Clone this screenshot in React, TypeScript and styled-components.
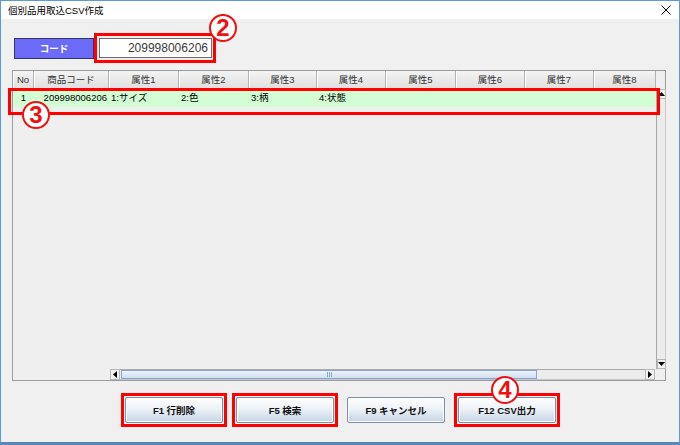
import styled, { createGlobalStyle } from "styled-components";

const GlobalStyle = createGlobalStyle`
  html, body {
    margin: 0;
    padding: 0;
    background: #ffffff;
  }
  body {
    font-family: "Liberation Sans", "Noto Sans CJK JP", sans-serif;
  }
`;

const Window = styled.div`
  width: 680px;
  height: 445px;
  box-sizing: border-box;
  border: 1px solid #5b9bd5;
  border-bottom: 3px solid #5a86b5;
  background: #f0f0f0;
  display: flex;
  flex-direction: column;
`;

const TitleBar = styled.div`
  height: 18px;
  background: #ffffff;
  display: flex;
  align-items: center;
  justify-content: space-between;
  padding: 0 8px 0 7px;
  font-size: 9.5px;
  color: #000;
`;

const Body = styled.div`
  flex: 1;
  display: flex;
  flex-direction: column;
  padding: 0 13px 0 10px;
`;

const CodeRow = styled.div`
  display: flex;
  align-items: center;
  margin-top: 14px;
  padding-left: 3px;
`;

const CodeLabel = styled.div`
  width: 80px;
  height: 21px;
  box-sizing: border-box;
  background: #6b6bf7;
  border: 1px solid #34346a;
  color: #ffffff;
  font-weight: 700;
  font-size: 9.5px;
  display: flex;
  align-items: center;
  justify-content: center;
`;

const Mark = styled.div<{ $on?: boolean; $pad?: string }>`
  position: relative;
  border: 3px solid ${(p) => (p.$on === false ? "transparent" : "#ff0000")};
  padding: ${(p) => p.$pad || "1px"};
`;

const CodeInput = styled.div`
  width: 113px;
  height: 20px;
  box-sizing: border-box;
  background: #ffffff;
  border: 1px solid #6d6d6d;
  color: #3a3a3a;
  font-size: 12px;
  text-align: right;
  padding-right: 3px;
  line-height: 18px;
`;

const Circle = styled.div<{ $x: number; $y: number }>`
  position: absolute;
  left: ${(p) => p.$x}px;
  top: ${(p) => p.$y}px;
  width: 28px;
  height: 28px;
  box-sizing: border-box;
  border: 2px solid #ee1111;
  border-radius: 50%;
  background: #ffffff;
  color: #ee1111;
  font-weight: 700;
  font-size: 24px;
  line-height: 1;
  display: flex;
  align-items: center;
  justify-content: center;
  z-index: 2;
`;

const TableFrame = styled.div`
  position: relative;
  margin-top: 7px;
  margin-left: 1px;
  height: 311px;
  box-sizing: border-box;
  border: 1px solid #9c9c9c;
  background: #efefef;
  display: flex;
  flex-direction: column;
`;

const TableMain = styled.div`
  flex: 1;
  display: flex;
  min-height: 0;
`;

const Grid = styled.div`
  width: 643px;
  display: flex;
  flex-direction: column;
`;

const HeaderRow = styled.div`
  display: flex;
  height: 18px;
`;

const HeaderCell = styled.div<{ $w: number; $left?: boolean }>`
  width: ${(p) => p.$w}px;
  box-sizing: border-box;
  background: linear-gradient(#f3f3f3, #dfdfdf);
  border-right: 1px solid #b3b3b3;
  box-shadow: inset 1px 0 #ffffff;
  color: #333;
  font-size: 9.5px;
  line-height: 18px;
  text-align: ${(p) => (p.$left ? "left" : "center")};
  padding-left: ${(p) => (p.$left ? "4px" : "0")};
`;

const DataRow = styled.div`
  display: flex;
  height: 18px;
  background: #d3fdd3;
`;

const DataCell = styled.div<{ $w: number; $align?: string }>`
  width: ${(p) => p.$w}px;
  box-sizing: border-box;
  color: #000;
  font-size: 9.5px;
  line-height: 18px;
  white-space: nowrap;
  overflow: hidden;
  text-align: ${(p) => p.$align || "left"};
  padding: 0 2px;
`;

const VScroll = styled.div`
  width: 10px;
  display: flex;
  flex-direction: column;
`;

const Corner = styled.div<{ $h: number }>`
  height: ${(p) => p.$h}px;
  width: 10px;
  flex: none;
`;

const VTrack = styled.div`
  flex: 1;
  box-sizing: border-box;
  border-left: 1px solid #a9a9a9;
  border-right: 1px solid #c8c8c8;
  background: #ececec;
  display: flex;
  flex-direction: column;
  justify-content: space-between;
`;

const ArrowBox = styled.div<{ $w: number; $h: number }>`
  width: ${(p) => p.$w}px;
  height: ${(p) => p.$h}px;
  box-sizing: border-box;
  flex: none;
  background: #f2f2f2;
  border: 1px solid #b8b8b8;
  display: flex;
  align-items: center;
  justify-content: center;
`;

const HScroll = styled.div`
  height: 11px;
  display: flex;
`;

const HSpacer = styled.div`
  width: 97px;
  flex: none;
`;

const HTrack = styled.div`
  flex: 1;
  box-sizing: border-box;
  border-top: 1px solid #a9a9a9;
  border-bottom: 1px solid #c8c8c8;
  background: #ececec;
  display: flex;
  align-items: stretch;
`;

const Thumb = styled.div`
  width: 416px;
  margin-left: 1px;
  box-sizing: border-box;
  border: 1px solid #86a6d2;
  background: linear-gradient(#eef4fb, #d0dff2);
  display: flex;
  align-items: center;
  justify-content: center;
  gap: 1px;
`;

const Grip = styled.span`
  width: 1px;
  height: 5px;
  background: #8aa6cc;
`;

const RowMark = styled.div`
  position: absolute;
  left: -5px;
  top: 17px;
  width: 652px;
  height: 27px;
  box-sizing: border-box;
  border: 3px solid #ff0000;
`;

const FooterBar = styled.div`
  display: flex;
  justify-content: center;
  gap: 5px;
  margin-top: 12px;
  padding-left: 4px;
`;

const FnButton = styled.div`
  width: 98px;
  height: 26px;
  box-sizing: border-box;
  border: 1px solid #7d90a6;
  border-radius: 2px;
  background: linear-gradient(#ffffff, #edf2f7 45%, #c5d5e7);
  box-shadow: inset 0 0 0 1px #f8fbff;
  color: #111;
  font-size: 9.5px;
  font-weight: 700;
  display: flex;
  align-items: center;
  justify-content: center;
`;

const columns = [
  { title: "No", w: 21, left: true },
  { title: "商品コード", w: 75 },
  { title: "属性1", w: 70 },
  { title: "属性2", w: 70 },
  { title: "属性3", w: 68 },
  { title: "属性4", w: 69 },
  { title: "属性5", w: 70 },
  { title: "属性6", w: 69 },
  { title: "属性7", w: 69 },
  { title: "属性8", w: 62 },
];

const row = ["1", "209998006206", "1:サイズ", "2:色", "3:柄", "4:状態", "", "", "", ""];

const buttons = [
  { label: "F1 行削除", mark: true },
  { label: "F5 検索", mark: true },
  { label: "F9 キャンセル", mark: false },
  { label: "F12 CSV出力", mark: true, num: "4" },
];

function Tri({ dir }: { dir: "up" | "down" | "left" | "right" }) {
  const pts = {
    up: "0,4 3.5,0 7,4",
    down: "0,0 3.5,4 7,0",
    left: "4,0 0,3.5 4,7",
    right: "0,0 4,3.5 0,7",
  }[dir];
  const vertical = dir === "up" || dir === "down";
  return (
    <svg width={vertical ? 7 : 4} height={vertical ? 4 : 7} viewBox={vertical ? "0 0 7 4" : "0 0 4 7"}>
      <polygon points={pts} fill="#000" />
    </svg>
  );
}

export default function App() {
  return (
    <>
      <GlobalStyle />
      <Window>
        <TitleBar>
          <span>個別品用取込CSV作成</span>
          <svg width="10" height="10" viewBox="0 0 10 10">
            <path d="M0.5 0.5 L9.5 9.5 M9.5 0.5 L0.5 9.5" stroke="#000" strokeWidth="1" />
          </svg>
        </TitleBar>
        <Body>
          <CodeRow>
            <CodeLabel>コード</CodeLabel>
            <Mark $pad="2px 1px 2px 2px">
              <CodeInput>209998006206</CodeInput>
              <Circle $x={112} $y={-22}>2</Circle>
            </Mark>
          </CodeRow>

          <TableFrame>
            <TableMain>
              <Grid>
                <HeaderRow>
                  {columns.map((c) => (
                    <HeaderCell key={c.title} $w={c.w} $left={c.left}>
                      {c.title}
                    </HeaderCell>
                  ))}
                </HeaderRow>
                <DataRow>
                  {row.map((v, i) => (
                    <DataCell
                      key={i}
                      $w={columns[i].w}
                      $align={i === 0 ? "center" : i === 1 ? "right" : "left"}
                    >
                      {v}
                    </DataCell>
                  ))}
                </DataRow>
              </Grid>
              <VScroll>
                <Corner $h={18} />
                <VTrack>
                  <ArrowBox $w={9} $h={10}>
                    <Tri dir="up" />
                  </ArrowBox>
                  <ArrowBox $w={9} $h={10}>
                    <Tri dir="down" />
                  </ArrowBox>
                </VTrack>
              </VScroll>
            </TableMain>
            <HScroll>
              <HSpacer />
              <ArrowBox $w={10} $h={11}>
                <Tri dir="left" />
              </ArrowBox>
              <HTrack>
                <Thumb>
                  <Grip />
                  <Grip />
                  <Grip />
                </Thumb>
              </HTrack>
              <ArrowBox $w={10} $h={11}>
                <Tri dir="right" />
              </ArrowBox>
              <Corner $h={11} />
            </HScroll>
            <RowMark>
              <Circle $x={11} $y={10}>3</Circle>
            </RowMark>
          </TableFrame>

          <FooterBar>
            {buttons.map((b) => (
              <Mark key={b.label} $on={b.mark}>
                <FnButton>{b.label}</FnButton>
                {b.num && (
                  <Circle $x={34} $y={-20}>
                    {b.num}
                  </Circle>
                )}
              </Mark>
            ))}
          </FooterBar>
        </Body>
      </Window>
    </>
  );
}
